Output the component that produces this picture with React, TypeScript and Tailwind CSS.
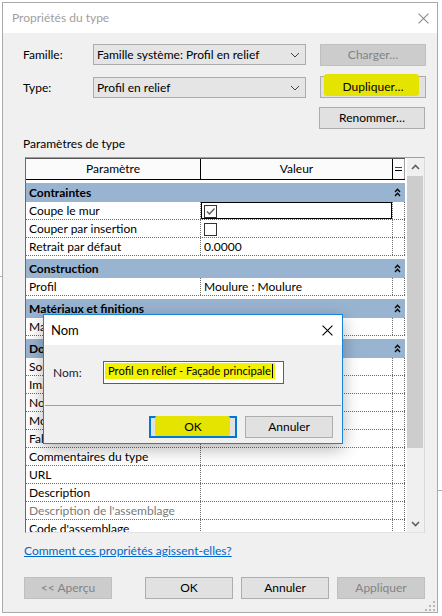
type Row =
  | { kind: "group"; label: string }
  | { kind: "row"; label: string; value?: string; muted?: boolean; selected?: boolean };

const rows: Row[] = [
  { kind: "group", label: "Contraintes" },
  { kind: "row", label: "Coupe le mur", value: "[x]", selected: true },
  { kind: "row", label: "Couper par insertion", value: "[ ]" },
  { kind: "row", label: "Retrait par défaut", value: "0.0000" },
  { kind: "group", label: "Construction" },
  { kind: "row", label: "Profil", value: "Moulure : Moulure" },
  { kind: "group", label: "Matériaux et finitions" },
  { kind: "row", label: "Matériau" },
  { kind: "group", label: "Données d'identification" },
  { kind: "row", label: "Sous-catégorie" },
  { kind: "row", label: "Image du type" },
  { kind: "row", label: "Note d'identification" },
  { kind: "row", label: "Modèle" },
  { kind: "row", label: "Fabricant" },
  { kind: "row", label: "Commentaires du type" },
  { kind: "row", label: "URL" },
  { kind: "row", label: "Description" },
  { kind: "row", label: "Description de l'assemblage", muted: true },
  { kind: "row", label: "Code d'assemblage" },
];

function Chevron({ up = false }: { up?: boolean }) {
  return (
    <svg width="9" height="6" viewBox="0 0 9 6" className="block">
      <path
        d={up ? "M1 5 L4.5 1.5 L8 5" : "M1 1 L4.5 4.5 L8 1"}
        fill="none"
        stroke="#606060"
        strokeWidth="1.6"
      />
    </svg>
  );
}

function ComboArrow() {
  return (
    <svg width="10" height="6" viewBox="0 0 10 6" className="block">
      <path d="M1 1 L5 5 L9 1" fill="none" stroke="#404040" strokeWidth="1" />
    </svg>
  );
}

function Collapse() {
  return (
    <svg width="7" height="9" viewBox="0 0 7 9" className="block">
      <path d="M1 4 L3.5 1.2 L6 4 M1 8 L3.5 5.2 L6 8" fill="none" stroke="#000" strokeWidth="1.3" />
    </svg>
  );
}

function CloseX({ color, size }: { color: string; size: number }) {
  return (
    <svg width={size} height={size} viewBox="0 0 10 10" className="block">
      <path d="M0.5 0.5 L9.5 9.5 M9.5 0.5 L0.5 9.5" stroke={color} strokeWidth="1" />
    </svg>
  );
}

function Checkbox({ checked = false }: { checked?: boolean }) {
  return (
    <div className="absolute left-[3px] top-[3px] h-[13px] w-[13px] border border-[#333] bg-white">
      {checked ? (
        <svg width="11" height="11" viewBox="0 0 11 11" className="block">
          <path d="M2 5.5 L4.5 8 L9.5 2.5" fill="none" stroke="#5a5a5a" strokeWidth="1.3" />
        </svg>
      ) : null}
    </div>
  );
}

function WinButton({
  label,
  width = "w-[106px]",
  disabled = false,
  marker = false,
}: {
  label: string;
  width?: string;
  disabled?: boolean;
  marker?: boolean;
}) {
  return (
    <div
      className={
        disabled
          ? `${width} relative flex h-[22px] items-center justify-center border border-[#bfbfbf] bg-[#cccccc] text-[#838383]`
          : `${width} relative flex h-[22px] items-center justify-center border border-[#adadad] bg-[#e1e1e1] text-black`
      }
    >
      {marker ? (
        <div className="absolute left-[3px] top-[-3px] h-[22px] w-[95px] rounded-[3px] bg-[#e4e400]" />
      ) : null}
      <span className="relative">{label}</span>
    </div>
  );
}

function Combo({ text }: { text: string }) {
  return (
    <div className="flex h-[21px] w-[213px] items-center justify-between border border-[#acacac] bg-[#e5e5e5] pl-[3px] pr-[5px]">
      <span>{text}</span>
      <ComboArrow />
    </div>
  );
}

function TableRow({ row }: { row: Row }) {
  if (row.kind === "group") {
    return (
      <div className="mt-[3px] flex h-[19px] shrink-0 bg-[#99b4d1]">
        <div className="w-[367px] pl-[3px] font-bold leading-[19px]">{row.label}</div>
        <div className="flex w-[12px] items-center justify-center pr-[3px]">
          <Collapse />
        </div>
      </div>
    );
  }
  return (
    <div className="flex h-[18px] shrink-0 border-b border-dotted border-[#6b6b6b]">
      <div
        className={`w-[175px] overflow-hidden whitespace-nowrap border-r border-dotted border-[#6b6b6b] pl-[3px] leading-[17px] ${
          row.muted ? "text-[#7a7a7a]" : "text-black"
        }`}
      >
        {row.label}
      </div>
      <div className="relative w-[192px] border-r border-dotted border-[#6b6b6b] pl-[3px] leading-[17px]">
        {row.value === "[x]" ? (
          <Checkbox checked />
        ) : row.value === "[ ]" ? (
          <Checkbox />
        ) : (
          row.value
        )}
        {row.selected ? <div className="absolute inset-0 border border-black" /> : null}
      </div>
      <div className="w-[12px] border-r border-dotted border-[#6b6b6b]" />
    </div>
  );
}

export default function App() {
  return (
    <div className="relative h-[616px] w-[442px] overflow-hidden bg-white font-['Lato','Segoe_UI',sans-serif] text-[12px] leading-[16px] text-black">
      {/* windows behind */}
      <div className="absolute left-0 top-[276px] h-px w-[2px] bg-[#b0b0b0]" />
      <div className="absolute left-[438px] top-[490px] h-px w-[4px] bg-[#b0b0b0]" />

      {/* main window */}
      <div className="relative ml-[2px] mt-[2px] flex h-[611px] w-[436px] flex-col border border-[#aaaaaa] bg-[#f0f0f0]">
        <div className="flex h-[30px] shrink-0 items-center justify-between bg-white pl-[9px] pr-[8px]">
          <span className="text-[12px] text-[#a0a0a0]">Propriétés du type</span>
          <CloseX color="#8a8a8a" size={11} />
        </div>

        <div className="flex flex-col pl-[20px]">
          <div className="mt-[11px] flex items-start">
            <div className="w-[70px] leading-[21px]">Famille:</div>
            <Combo text="Famille système: Profil en relief" />
            <div className="ml-[14px]">
              <WinButton label="Charger…" disabled />
            </div>
          </div>

          <div className="mt-[10px] flex items-start">
            <div className="mt-[1px] w-[70px] leading-[21px]">Type:</div>
            <div className="mt-[1px]">
              <Combo text="Profil en relief" />
            </div>
            <div className="ml-[14px]">
              <WinButton label="Dupliquer…" marker />
            </div>
          </div>

          <div className="mt-[9px] flex">
            <div className="ml-[296px]">
              <WinButton label="Renommer…" />
            </div>
          </div>

          <div className="mt-[7px]">Paramètres de type</div>

          <div className="ml-[2px] mt-[5px] flex h-[376px] w-[400px] border border-[#a0a0a0] border-b-[#e3e3e3] border-l-[#696969] border-r-[#dadada] bg-white">
            <div className="flex w-[379px] flex-col overflow-hidden">
              <div className="flex h-[22px] shrink-0 border-b border-t border-b-black border-t-[#555555] bg-[#fbfbfb]">
                <div className="w-[175px] border-r border-black text-center leading-[20px]">Paramètre</div>
                <div className="w-[192px] border-r border-black text-center leading-[20px]">Valeur</div>
                <div className="flex w-[12px] flex-col items-center justify-center gap-[2px] border-r border-[#a0a0a0]">
                  <div className="h-px w-[7px] bg-[#6b3b1b]" />
                  <div className="h-px w-[7px] bg-black" />
                </div>
              </div>
              {rows.map((row) => (
                <TableRow key={row.label} row={row} />
              ))}
            </div>
            <div className="w-[2px]" />
            <div className="flex w-[17px] flex-col bg-[#f0f0f0]">
              <div className="flex h-[18px] items-center justify-center">
                <Chevron up />
              </div>
              <div className="h-[272px] w-[16px] bg-[#cdcdcd]" />
              <div className="flex-1" />
              <div className="flex h-[17px] items-center justify-center">
                <Chevron />
              </div>
            </div>
          </div>

          <div className="ml-[1px] mt-[10px]">
            <span className="text-[#0066cc] underline">Comment ces propriétés agissent-elles?</span>
          </div>

          <div className="ml-[1px] mt-[18px] flex">
            <WinButton label="<< Aperçu" width="w-[88px]" disabled />
            <div className="ml-[33px]">
              <WinButton label="OK" width="w-[88px]" />
            </div>
            <div className="ml-[8px]">
              <WinButton label="Annuler" width="w-[88px]" />
            </div>
            <div className="ml-[8px]">
              <WinButton label="Appliquer" width="w-[88px]" disabled />
            </div>
          </div>
        </div>

        {/* size grip */}
        <div className="absolute left-[430px] top-[598px] h-[2px] w-[2px] bg-[#b8b8b8]" />
        <div className="absolute left-[426px] top-[602px] h-[2px] w-[2px] bg-[#b8b8b8]" />
        <div className="absolute left-[430px] top-[602px] h-[2px] w-[2px] bg-[#b8b8b8]" />
        <div className="absolute left-[422px] top-[606px] h-[2px] w-[2px] bg-[#b8b8b8]" />
        <div className="absolute left-[426px] top-[606px] h-[2px] w-[2px] bg-[#b8b8b8]" />
        <div className="absolute left-[430px] top-[606px] h-[2px] w-[2px] bg-[#b8b8b8]" />
      </div>

      {/* Nom dialog */}
      <div className="absolute left-[43px] top-[314px] flex h-[130px] w-[300px] flex-col border border-[#1883d7] bg-[#f0f0f0] shadow-[0_5px_16px_rgba(0,0,0,0.3)]">
        <div className="flex h-[30px] shrink-0 items-center justify-between bg-white pl-[7px] pr-[9px]">
          <span className="text-[13px]">Nom</span>
          <CloseX color="#000000" size={11} />
        </div>
        <div className="flex h-[60px] items-start pl-[9px] pt-[16px]">
          <div className="w-[50px] leading-[23px] text-[#1a1a3a]">Nom:</div>
          <div className="flex h-[23px] w-[181px] items-start border border-[#0078d7] bg-white pl-[1px] pt-[1px]">
            <div className="flex h-[16px] items-center whitespace-nowrap bg-[#f2f200] pl-[3px] pr-[2px] text-[11.2px]">
              Profil en relief - Façade principale
              <span className="ml-[1px] h-[14px] w-px bg-black" />
            </div>
          </div>
        </div>
        <div className="mx-[1px] h-px bg-[#a0a0a0]" />
        <div className="flex pl-[105px] pt-[10px]">
          <div className="relative flex h-[22px] w-[88px] items-center justify-center border-2 border-[#0078d7] bg-[#e1e1e1]">
            <div className="absolute left-[4px] top-[-2px] h-[20px] w-[75px] rounded-[2px] bg-[#e4e400]" />
            <span className="relative">OK</span>
          </div>
          <div className="ml-[8px]">
            <WinButton label="Annuler" width="w-[88px]" />
          </div>
        </div>
      </div>
    </div>
  );
}
